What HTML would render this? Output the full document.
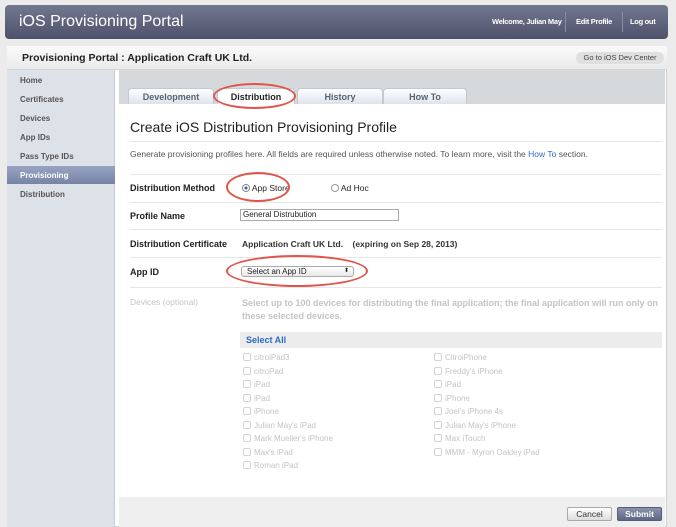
<!DOCTYPE html>
<html><head><style>
*{margin:0;padding:0;box-sizing:border-box}
body{width:676px;height:527px;background:#ebebeb;font-family:"Liberation Sans",sans-serif;position:relative;overflow:hidden;font-size:9px;color:#222}
.a{position:absolute}
#hdr{left:5px;top:5px;width:663px;height:34px;border-radius:4px;background:linear-gradient(#737891,#4d526a);color:#fff}
#hdr .t{left:14px;top:8px;font-size:16px}
#hdr .r{top:12px;font-size:7.5px;font-weight:bold}
.sep{top:7px;width:1px;height:20px;background:#8a8fa4}
#panel{left:7px;top:46px;width:660px;height:481px;background:#fff;border:1px solid #d0d0d0}
#bar{left:7px;top:46px;width:660px;height:24px;background:linear-gradient(#fafafa,#eaeaea);border-bottom:1px solid #d4d4d4}
#side{left:7px;top:70px;width:108px;height:457px;background:#dde1e8;border-right:1px solid #c8ccd4}
.si{position:absolute;left:13px;font-size:8px;font-weight:bold;color:#555}
#strip{left:119px;top:70px;width:546px;height:34px;background:#d6d9dc}
.tab{position:absolute;top:88px;height:16px;border-radius:4px 4px 0 0;background:linear-gradient(#fff,#dde3ec);border:1px solid #c4c8cf;border-bottom:none;font-size:9px;font-weight:bold;color:#5a6275;text-align:center;line-height:16px}
.hl{position:absolute;height:1px;background:#e6e6e6;left:130px;width:532px}
.lb{position:absolute;left:130px;font-size:9px;font-weight:bold;color:#222}
.g{color:#c4c4c4}
.cb{position:absolute;font-size:8px;color:#c4c4c4}
.cb i{display:inline-block;width:8px;height:8px;border:1px solid #d4d4d4;border-radius:2px;margin-right:3px;vertical-align:-1px}
.ell{position:absolute;border:2px solid #e0554a;border-radius:50%}
.btn{position:absolute;top:507px;height:14px;border-radius:2px;font-size:8.5px;text-align:center;line-height:13px}
</style></head><body>
<div id="hdr" class="a">
<div class="a t">iOS Provisioning Portal</div>
<div class="a r" style="left:487px;letter-spacing:-0.3px">Welcome, Julian May</div>
<div class="a sep" style="left:560px"></div>
<div class="a r" style="left:571px;letter-spacing:-0.3px">Edit Profile</div>
<div class="a sep" style="left:617px"></div>
<div class="a r" style="left:625px;letter-spacing:-0.3px">Log out</div>
</div>
<div id="panel" class="a"></div>
<div id="bar" class="a"><div class="a" style="left:15px;top:6px;font-size:10.5px;font-weight:bold">Provisioning Portal : Application Craft UK Ltd.</div>
<div class="a" style="left:569px;top:6px;width:88px;height:12px;border-radius:6px;background:#e0e0e0;font-size:7.5px;text-align:center;line-height:12px;color:#444">Go to iOS Dev Center</div></div>
<div id="side" class="a">
<div class="si" style="top:6px">Home</div>
<div class="si" style="top:25px">Certificates</div>
<div class="si" style="top:44px">Devices</div>
<div class="si" style="top:63px">App IDs</div>
<div class="si" style="top:82px">Pass Type IDs</div>
<div class="a" style="left:0;top:96px;width:108px;height:18px;background:linear-gradient(#98a4c2,#7683a6)"></div>
<div class="si" style="top:101px;color:#fff">Provisioning</div>
<div class="si" style="top:120px">Distribution</div>
</div>
<div id="strip" class="a"></div>
<div class="tab" style="left:128px;width:86px">Development</div>
<div class="tab" style="left:217px;width:78px;background:#fff;color:#222">Distribution</div>
<div class="tab" style="left:297px;width:86px">History</div>
<div class="tab" style="left:383px;width:84px">How To</div>
<div class="ell" style="left:213px;top:83px;width:83px;height:26px"></div>
<div class="a" style="left:130px;top:119px;font-size:14px;color:#222">Create iOS Distribution Provisioning Profile</div>
<div class="hl" style="top:141px"></div>
<div class="a" style="left:130px;top:149px;font-size:8.5px;color:#555">Generate provisioning profiles here. All fields are required unless otherwise noted. To learn more, visit the <span style="color:#2a6bc4">How To</span> section.</div>
<div class="hl" style="top:174px"></div>
<div class="lb" style="top:183px">Distribution Method</div>
<div class="a" style="left:242px;top:183px;font-size:8.5px"><span style="display:inline-block;width:8px;height:8px;border-radius:50%;border:1px solid #888;background:radial-gradient(#2a5fb0 30%,#fff 40%);vertical-align:-1px"></span> App Store</div>
<div class="a" style="left:331px;top:183px;font-size:8.5px"><span style="display:inline-block;width:8px;height:8px;border-radius:50%;border:1px solid #999;vertical-align:-1px"></span> Ad Hoc</div>
<div class="ell" style="left:226px;top:172px;width:64px;height:30px"></div>
<div class="hl" style="top:202px"></div>
<div class="lb" style="top:211px">Profile Name</div>
<div class="a" style="left:240px;top:209px;width:159px;height:12px;border:1px solid #aaa;font-size:8px;padding-left:2px;line-height:10px">General Distrubution</div>
<div class="hl" style="top:229px"></div>
<div class="lb" style="top:239px">Distribution Certificate</div>
<div class="a" style="left:242px;top:239px;font-size:8.5px;font-weight:bold;color:#333">Application Craft UK Ltd.&nbsp;&nbsp;&nbsp;&nbsp;(expiring on Sep 28, 2013)</div>
<div class="hl" style="top:257px"></div>
<div class="lb" style="top:267px">App ID</div>
<div class="a" style="left:241px;top:266px;width:113px;height:11px;border:1px solid #aaa;border-radius:3px;background:linear-gradient(#fff,#e8e8e8);font-size:8px;padding-left:5px;line-height:9px">Select an App ID<span style="position:absolute;right:4px;font-size:6px">⬍</span></div>
<div class="ell" style="left:226px;top:255px;width:142px;height:32px"></div>
<div class="hl" style="top:287px"></div>
<div class="a g" style="left:130px;top:297px;font-size:8.5px">Devices (optional)</div>
<div class="a g" style="left:242px;top:297px;width:430px;font-size:9px;font-weight:bold;line-height:13px;white-space:nowrap">Select up to 100 devices for distributing the final application; the final application will run only on<br>these selected devices.</div>
<div class="a" style="left:240px;top:332px;width:422px;height:16px;background:#ececec;font-size:9px;font-weight:bold;color:#2a6bc4;padding:3px 6px">Select All</div>
<div class="cb" style="left:243px;top:351px;line-height:13.5px"><i></i>citroiPad3<br><i></i>citroPad<br><i></i>iPad<br><i></i>iPad<br><i></i>iPhone<br><i></i>Julian May's iPad<br><i></i>Mark Mueller's iPhone<br><i></i>Max's iPad<br><i></i>Roman iPad</div>
<div class="cb" style="left:434px;top:351px;line-height:13.5px"><i></i>CitroiPhone<br><i></i>Freddy's iPhone<br><i></i>iPad<br><i></i>iPhone<br><i></i>Joel's iPhone 4s<br><i></i>Julian May's iPhone<br><i></i>Max iTouch<br><i></i>MMM - Myron Oakley iPad</div>
<div class="a" style="left:119px;top:497px;width:546px;height:30px;background:#efefef"></div>
<div class="btn" style="left:567px;width:45px;border:1px solid #aaa;background:linear-gradient(#fff,#ddd);color:#333">Cancel</div>
<div class="btn" style="left:617px;width:45px;border:1px solid #555e78;background:linear-gradient(#8a93ad,#5d6784);color:#fff;font-weight:bold">Submit</div>
</body></html>
